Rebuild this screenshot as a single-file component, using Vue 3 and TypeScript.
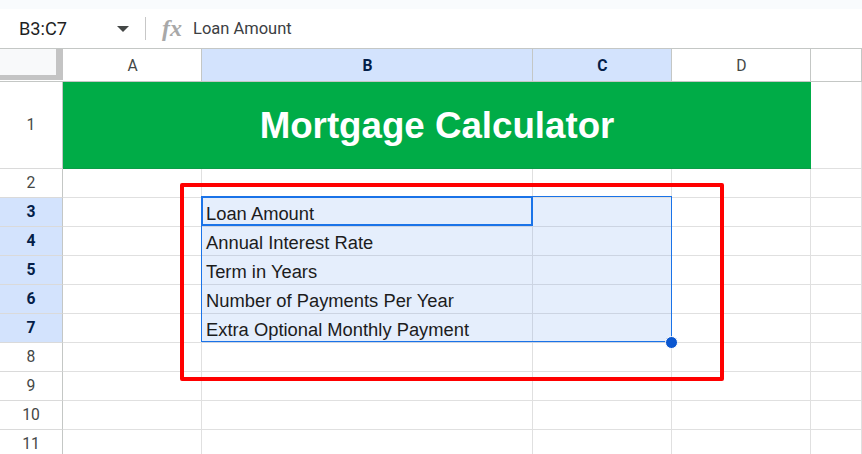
<script setup lang="ts">
const cols = [
  { label: 'A', active: false },
  { label: 'B', active: true },
  { label: 'C', active: true },
  { label: 'D', active: false },
  { label: '', active: false },
]
const rows = [
  { n: 2, text: '', active: false },
  { n: 3, text: 'Loan Amount', active: true },
  { n: 4, text: 'Annual Interest Rate', active: true },
  { n: 5, text: 'Term in Years', active: true },
  { n: 6, text: 'Number of Payments Per Year', active: true },
  { n: 7, text: 'Extra Optional Monthly Payment', active: true },
  { n: 8, text: '', active: false },
  { n: 9, text: '', active: false },
  { n: 10, text: '', active: false },
  { n: 11, text: '', active: false },
]
</script>

<template>
  <div class="app">
    <div class="strip"></div>
    <div class="formula">
      <div class="namebox">B3:C7</div>
      <svg class="caret" width="12" height="6" viewBox="0 0 12 6"><path d="M0 0h12L6 6z" fill="#444746" /></svg>
      <div class="sep"></div>
      <span class="fx">fx</span>
      <div class="ftext">Loan Amount</div>
    </div>
    <div class="sheet">
      <div class="corner"><div class="corner-in"></div></div>
      <div v-for="c in cols" :key="c.label" class="colh" :class="{ on: c.active }">{{ c.label }}</div>

      <div class="rowh tall">1</div>
      <div class="title">Mortgage Calculator</div>
      <div class="cell"></div>

      <template v-for="r in rows" :key="r.n">
        <div class="rowh" :class="{ on: r.active }">{{ r.n }}</div>
        <div class="cell"></div>
        <div class="cell text" :class="{ sel: r.active }">{{ r.text }}</div>
        <div class="cell" :class="{ sel: r.active }"></div>
        <div class="cell"></div>
        <div class="cell"></div>
      </template>

      <div class="range"></div>
      <div class="activecell"></div>
      <div class="handle"></div>
      <div class="annot"></div>
    </div>
  </div>
</template>

<style>
html, body { margin: 0; background: #fff; }
</style>

<style scoped>
.app {
  width: 862px;
  height: 454px;
  overflow: hidden;
  background: #fff;
  font-family: Roboto, "Liberation Sans", sans-serif;
  color: #1f1f1f;
}
.strip { height: 9px; background: #f9fbfd; }
.formula {
  height: 39px;
  display: flex;
  align-items: center;
  background: #fff;
}
.namebox {
  width: 98px;
  padding-left: 19px;
  font-size: 18.2px;
  color: #1f1f1f;
}
.caret { margin-top: 1px; }
.sep { width: 1px; height: 23px; background: #c7c7c7; margin-left: 16px; }
.fx {
  margin-left: 16px;
  font-family: "Liberation Serif", serif;
  font-style: italic;
  font-weight: 700;
  font-size: 24px;
  color: #a8a8a8;
  width: 19px;
}
.ftext { margin-left: 12px; font-size: 16.5px; color: #3c4043; }
.sheet {
  position: relative;
  display: grid;
  grid-template-columns: 63px 139px 331px 139px 139px 51px;
  grid-template-rows: 33px 87px repeat(10, 29px);
  border-top: 1px solid #c4c7c5;
  overflow: hidden;
}
.corner {
  box-sizing: border-box;
  background: #fff;
  border-bottom: 1px solid #c4c7c5;
  padding-bottom: 1px;
}
.corner-in {
  box-sizing: border-box;
  height: 100%;
  background: #f8f9fa;
  border-right: 7px solid #c4c4c4;
  border-bottom: 5px solid #c4c4c4;
}
.colh, .rowh {
  box-sizing: border-box;
  display: flex;
  align-items: center;
  justify-content: center;
  font-size: 15.7px;
  color: #444746;
  background: #fff;
  border-right: 1px solid #c4c7c5;
  border-bottom: 1px solid #c4c7c5;
}
.colh { padding-left: 1px; }
.rowh { padding-bottom: 1px; }
.colh.on, .rowh.on {
  background: #d3e3fd;
  color: #041e49;
  font-weight: 700;
}
.rowh { border-bottom-color: #dadada; }
.title {
  grid-column: 2 / span 4;
  background: #00ac47;
  color: #fff;
  font-family: "Liberation Sans", sans-serif;
  font-weight: 700;
  font-size: 36.7px;
  display: flex;
  align-items: center;
  justify-content: center;
  padding-top: 2px;
  box-sizing: border-box;
  border-bottom: 1px solid #0a9c47;
}
.cell {
  box-sizing: border-box;
  border-right: 1px solid #e0e0e0;
  border-bottom: 1px solid #e0e0e0;
  min-width: 0;
}
.cell.sel {
  background: #e5eefc;
  border-color: #ccd4e2;
}
.text {
  font-family: "Liberation Sans", sans-serif;
  font-size: 18.35px;
  line-height: 26px;
  padding: 3px 0 0 4px;
  color: #1c1c1c;
  white-space: nowrap;
}
.range {
  position: absolute;
  left: 201px;
  top: 147px;
  width: 471px;
  height: 146px;
  box-sizing: border-box;
  border: 1px solid #1a73e8;
}
.activecell {
  position: absolute;
  left: 201px;
  top: 147px;
  width: 332px;
  height: 30px;
  box-sizing: border-box;
  border: 2px solid #1a73e8;
}
.handle {
  position: absolute;
  left: 665px;
  top: 287px;
  width: 13px;
  height: 13px;
  box-sizing: border-box;
  background: #0b57d0;
  border: 1px solid #fff;
  border-radius: 50%;
}
.annot {
  position: absolute;
  left: 180px;
  top: 134px;
  width: 544px;
  height: 198px;
  box-sizing: border-box;
  border: 4px solid #ff0000;
  border-radius: 2px;
}
</style>
